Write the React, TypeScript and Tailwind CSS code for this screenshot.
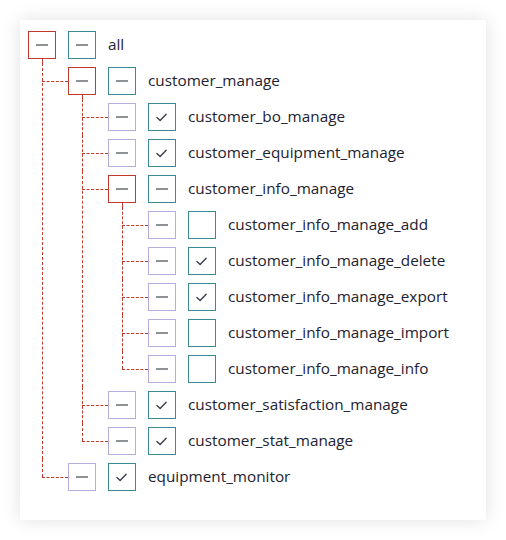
import React from 'react';

type TreeNode = {
  label: string;
  checked?: boolean;
  partial?: boolean;
  children?: TreeNode[];
};

const tree: TreeNode = {
  label: 'all',
  partial: true,
  children: [
    {
      label: 'customer_manage',
      partial: true,
      children: [
        { label: 'customer_bo_manage', checked: true },
        { label: 'customer_equipment_manage', checked: true },
        {
          label: 'customer_info_manage',
          partial: true,
          children: [
            { label: 'customer_info_manage_add' },
            { label: 'customer_info_manage_delete', checked: true },
            { label: 'customer_info_manage_export', checked: true },
            { label: 'customer_info_manage_import' },
            { label: 'customer_info_manage_info' },
          ],
        },
        { label: 'customer_satisfaction_manage', checked: true },
        { label: 'customer_stat_manage', checked: true },
      ],
    },
    { label: 'equipment_monitor', checked: true },
  ],
};

const Minus = () => <span className="block w-3 h-[2px] bg-[#8e9196]" />;

const Check = () => (
  <svg width="28" height="28" viewBox="0 0 28 28" fill="none">
    <path d="M8.5 14.5 L12 17.8 L18.5 11" stroke="#2f3440" strokeWidth="1.3" strokeLinecap="round" strokeLinejoin="round" />
  </svg>
);

const Node = ({ node }: { node: TreeNode }) => {
  const hasChildren = !!node.children?.length;
  return (
    <div>
      <div className="relative flex items-center h-9 gap-3">
        <div
          className={`w-7 h-7 shrink-0 flex items-center justify-center border ${
            hasChildren ? 'border-[#c1392b]' : 'border-[#b8acde]'
          }`}
        >
          <Minus />
        </div>
        {hasChildren && (
          <span className="absolute left-[14px] top-8 h-1 border-l border-dashed border-[#c1392b]" />
        )}
        <div className="w-7 h-7 shrink-0 flex items-center justify-center border border-[#3b8994]">
          {node.partial ? <Minus /> : node.checked ? <Check /> : null}
        </div>
        <span className="text-[15.3px] text-[#1c2230] leading-none -mt-px">{node.label}</span>
      </div>
      {hasChildren && (
        <div className="pl-10">
          {node.children!.map((child, i) => {
            const last = i === node.children!.length - 1;
            return (
              <div key={child.label} className="relative">
                <span
                  className={`absolute left-[-26px] top-0 border-l border-dashed border-[#c1392b] ${
                    last ? 'h-[18px]' : 'h-full'
                  }`}
                />
                <span className="absolute left-[-26px] top-[18px] w-[26px] border-t border-dashed border-[#c1392b]" />
                <Node node={child} />
              </div>
            );
          })}
        </div>
      )}
    </div>
  );
};

export default function App() {
  return (
    <div className="w-[506px] h-[540px] bg-white p-5" style={{ fontFamily: '"Open Sans", "Noto Sans", sans-serif' }}>
      <div className="w-[466px] h-[500px] bg-white shadow-[0_0_18px_rgba(0,0,0,0.12)] pl-2 pt-[7px]">
        <Node node={tree} />
      </div>
    </div>
  );
}
